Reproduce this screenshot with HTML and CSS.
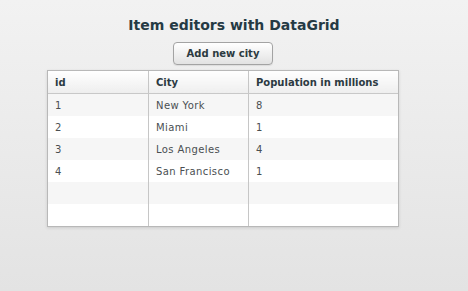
FILE: index.html
```html
<!DOCTYPE html>
<html>
<head>
<meta charset="utf-8">
<link rel="stylesheet" href="styles.css">
</head>
<body>
<div class="app">
  <h1 class="title">Item editors with DataGrid</h1>
  <div class="panel">
    <button class="btn">Add new city</button>
    <div class="grid">
      <table>
        <thead>
          <tr><th class="c1">id</th><th class="c2">City</th><th class="c3">Population in millions</th></tr>
        </thead>
        <tbody>
          <tr class="alt"><td>1</td><td>New York</td><td>8</td></tr>
          <tr><td>2</td><td>Miami</td><td>1</td></tr>
          <tr class="alt"><td>3</td><td>Los Angeles</td><td>4</td></tr>
          <tr><td>4</td><td>San Francisco</td><td>1</td></tr>
          <tr class="alt"><td></td><td></td><td></td></tr>
          <tr><td></td><td></td><td></td></tr>
        </tbody>
      </table>
    </div>
  </div>
</div>
</body>
</html>
```

FILE: styles.css
```css
html, body {
  margin: 0;
  padding: 0;
  height: 100%;
}
body {
  background: linear-gradient(#f2f2f2, #e3e3e3);
  font-family: "DejaVu Sans", Verdana, sans-serif;
}
.app {
  display: flex;
  flex-direction: column;
  padding-top: 16px;
}
.title {
  margin: 0;
  text-align: center;
  font-size: 14px;
  font-weight: bold;
  color: #253a44;
  line-height: 18px;
  height: 18px;
}
.panel {
  margin-left: 47px;
  width: 352px;
  display: flex;
  flex-direction: column;
  align-items: center;
  margin-top: 8px;
}
.btn {
  width: 100px;
  height: 23px;
  border: 1px solid #a3a3a3;
  border-radius: 4px;
  background: linear-gradient(#ffffff, #e2e2e2);
  font-family: "DejaVu Sans", Verdana, sans-serif;
  font-weight: bold;
  font-size: 10px;
  color: #2c3a40;
  padding: 0;
  box-shadow: 0 1px 1px rgba(0,0,0,0.08);
}
.grid {
  margin-top: 5px;
  width: 352px;
  border: 1px solid #b8b8b8;
  box-sizing: border-box;
  background: #fff;
  box-shadow: 0 1px 3px rgba(0,0,0,0.12);
}
table {
  width: 100%;
  border-collapse: collapse;
  table-layout: fixed;
}
th, td {
  text-align: left;
  padding: 0 0 0 7px;
  font-size: 10px;
  white-space: nowrap;
}
th {
  height: 22px;
  font-weight: bold;
  color: #2c3a42;
  background: linear-gradient(#ffffff, #eeeeee);
  border-bottom: 1px solid #c8c8c8;
}
td {
  height: 22px;
  color: #4a4f52;
  letter-spacing: 0.4px;
}
th + th, td + td {
  border-left: 1px solid #c6c6c6;
}
.c1 { width: 93px; }
.c2 { width: 92px; }
tr.alt td { background: #f6f6f6; }
```
